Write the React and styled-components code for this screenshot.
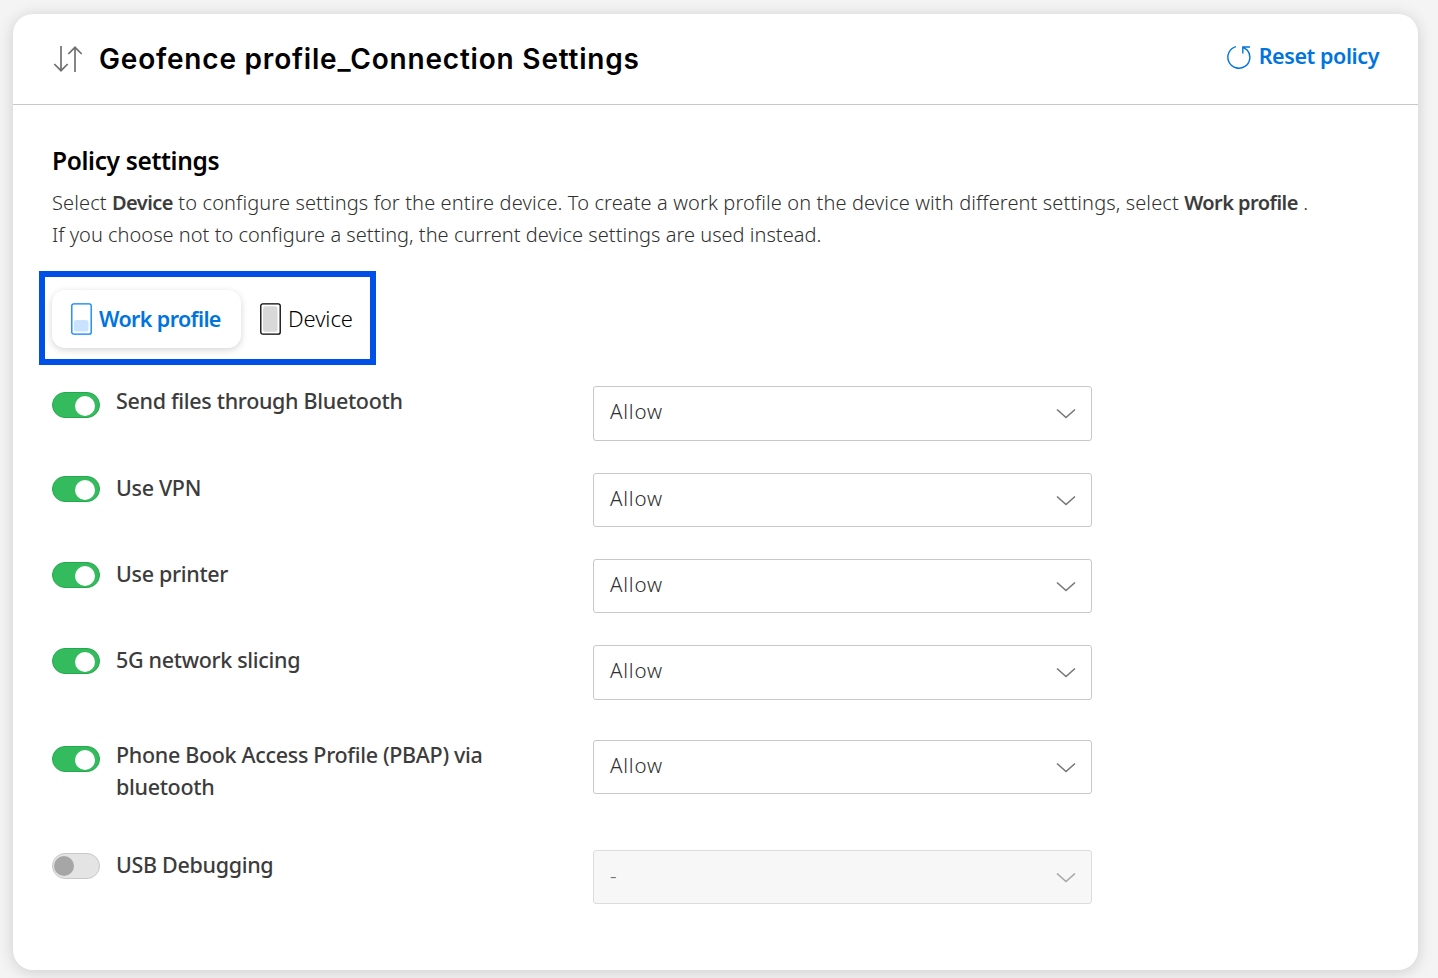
import React from "react";
import styled, { createGlobalStyle, css } from "styled-components";

const GlobalStyle = createGlobalStyle`
  * { box-sizing: border-box; }
  body {
    margin: 0;
    background: #f4f4f4;
    color: #3c3c3c;
    font-family: "Noto Sans", "Open Sans", sans-serif;
    overflow: hidden;
  }
  button { font-family: inherit; }
`;

const Page = styled.main`
  height: 978px;
  padding: 14px 20px 8px 13px;
`;

const Card = styled.section`
  height: 956px;
  border-radius: 20px;
  background: #fff;
  box-shadow: 0 2px 16px rgba(0, 0, 0, 0.16);
`;

const Header = styled.header`
  height: 91px;
  padding: 0 39px 0 40px;
  display: flex;
  align-items: center;
  border-bottom: 1px solid #c8c8c8;
`;

const SortIcon = styled.svg`
  flex: none;
  width: 30px;
  height: 28px;
  margin-right: 16px;
`;

const Title = styled.h1`
  margin: 0;
  font: 600 28px/40px Inter, sans-serif;
  letter-spacing: 0.8px;
  white-space: nowrap;
  color: #000;
`;

const ResetButton = styled.button`
  margin: 0 0 6px auto;
  padding: 0;
  border: 0;
  background: none;
  display: flex;
  align-items: center;
  gap: 8px;
  color: #0074de;
  font-size: 21.5px;
  font-weight: 600;
  line-height: 30px;
  letter-spacing: -0.42px;
  white-space: nowrap;

  svg {
    margin-top: 2px;
  }
`;

const Body = styled.div`
  padding: 40px 39px 0;
`;

const SectionTitle = styled.h2`
  margin: 0;
  font-size: 24.5px;
  font-weight: 600;
  line-height: 32px;
  letter-spacing: -0.35px;
  color: #000;
`;

const Description = styled.div`
  margin: 10px 0 0;
  font-size: 20px;
  font-weight: 300;
  line-height: 32px;
  color: #303030;
  white-space: nowrap;
`;

const Line = styled.p`
  margin: 0;
  letter-spacing: ${(p) => p.$tracking}px;

  strong {
    font-weight: 600;
    letter-spacing: -0.55px;
    color: #3c3c3c;
  }
`;

const TabFrame = styled.div`
  width: 337px;
  height: 94px;
  margin: 20px 0 0 -13px;
  padding: 13px 7px;
  border: 6px solid #004fe6;
  display: flex;
`;

const Tab = styled.button`
  height: 58px;
  padding: 0 0 0 19px;
  border: 0;
  border-radius: 13px;
  background: transparent;
  display: flex;
  align-items: center;
  gap: 6px;
  font-size: 22px;
  font-weight: 300;
  line-height: 30px;
  letter-spacing: -0.1px;
  white-space: nowrap;
  color: #000;

  span {
    margin-bottom: 2px;
  }

  ${(p) =>
    p.$active &&
    css`
      width: 189px;
      flex: none;
      font-size: 21.5px;
      font-weight: 600;
      letter-spacing: -0.62px;
      background: #fff;
      color: #0074de;
      box-shadow: 0 2px 7px rgba(0, 0, 0, 0.17);

      span {
        margin-bottom: 0;
      }
    `}
`;

const Phone = styled.svg`
  flex: none;
  width: 22px;
  height: 32px;
`;

const Settings = styled.div`
  margin-top: 21px;
`;

const Row = styled.div`
  height: ${(p) => p.$height}px;
  display: grid;
  grid-template-columns: 64px 477px 499px;
  align-items: start;
`;

const Toggle = styled.button`
  width: 48px;
  height: 26px;
  margin-top: ${(p) => p.$top}px;
  padding: 2px;
  border: 1px solid ${(p) => (p.$on ? "#22a94d" : "#c8c8c8")};
  border-radius: 13px;
  background: ${(p) => (p.$on ? "#33bb5d" : "#e4e4e4")};
  display: flex;
  align-items: center;
  justify-content: ${(p) => (p.$on ? "flex-end" : "flex-start")};

  &::after {
    content: "";
    width: 20px;
    height: 20px;
    margin: ${(p) => (p.$on ? "1px 2px 0 0" : "0 0 0 -1px")};
    border-radius: 50%;
    background: ${(p) => (p.$on ? "#fff" : "#a6a6a6")};
  }
`;

const Label = styled.label`
  max-width: 385px;
  margin-top: -1px;
  font-size: 21.5px;
  font-weight: 500;
  line-height: 32px;
  letter-spacing: -0.32px;
`;

const Select = styled.button`
  height: ${(p) => p.$height}px;
  padding: 0 15px 5px 16px;
  border: 1px solid ${(p) => (p.disabled ? "#dcdcdc" : "#c8c8c8")};
  border-radius: 3px;
  background: ${(p) => (p.disabled ? "#f7f7f7" : "#fff")};
  color: ${(p) => (p.disabled ? "#707070" : "#303030")};
  display: flex;
  align-items: center;
  justify-content: space-between;
  font-size: 20.5px;
  font-weight: 300;
  line-height: 30px;
  letter-spacing: 0.8px;
`;

const Chevron = styled.svg`
  width: 20px;
  height: 12px;
  margin-top: 6px;
  stroke: ${(p) => (p.$muted ? "#a6a6a6" : "#777")};
`;

const settings = [
  { name: "Send files through Bluetooth", value: "Allow", height: 87, toggleTop: 6, selectHeight: 55 },
  { name: "Use VPN", value: "Allow", height: 86, toggleTop: 3, selectHeight: 54 },
  { name: "Use printer", value: "Allow", height: 86, toggleTop: 3, selectHeight: 54 },
  { name: "5G network slicing", value: "Allow", height: 95, toggleTop: 3, selectHeight: 55 },
  { name: "Phone Book Access Profile (PBAP) via bluetooth", value: "Allow", height: 110, toggleTop: 6, selectHeight: 54 },
  { name: "USB Debugging", value: "-", height: 54, toggleTop: 3, selectHeight: 54, off: true },
];

function PhoneIcon({ color, fill, y, height }) {
  return (
    <Phone viewBox="0 0 22 32">
      <rect x="0.8" y="0.8" width="19.4" height="30.4" rx="2" fill="none" stroke={color} strokeWidth="1.3" />
      <rect x="3" y={y} width="14.5" height={height} rx="2.5" fill={fill} />
    </Phone>
  );
}

function Setting({ name, value, height, toggleTop, selectHeight, off }) {
  return (
    <Row $height={height}>
      <Toggle $on={!off} $top={toggleTop} aria-label={name} />
      <Label>{name}</Label>
      <Select $height={selectHeight} disabled={off}>
        {value}
        <Chevron $muted={off} viewBox="0 0 20 12" fill="none" strokeWidth="1.6">
          <path d="M1 1.5 10 9.5 19 1.5" />
        </Chevron>
      </Select>
    </Row>
  );
}

export default function App() {
  return (
    <Page>
      <GlobalStyle />
      <Card>
        <Header>
          <SortIcon viewBox="0 0 30 28" fill="none" stroke="#707070" strokeWidth="1.7">
            <path d="M8 1V26M1.3 19 8 25.7 14.7 19M22 27V2M15.3 9 22 2.3 28.7 9" />
          </SortIcon>
          <Title>Geofence profile_Connection Settings</Title>
          <ResetButton>
            <svg width="24" height="24" viewBox="0 0 24 24" fill="none" stroke="#0074de" strokeWidth="1.4">
              <path d="M9 1.6A11 11 0 1 0 20 4.8M15.8 8.5V2H23M16.2 2.4 20 4.8" />
            </svg>
            <span>Reset policy</span>
          </ResetButton>
        </Header>
        <Body>
          <SectionTitle>Policy settings</SectionTitle>
          <Description>
            <Line $tracking={0.12}>
              Select <strong>Device</strong> to configure settings for the entire device. To create a work profile on
              the device with different settings, select <strong>Work profile</strong> .
            </Line>
            <Line $tracking={0.02}>
              If you choose not to configure a setting, the current device settings are used instead.
            </Line>
          </Description>
          <TabFrame>
            <Tab $active>
              <PhoneIcon color="#0080ff" fill="#c9e3fe" y={17} height={11.5} />
              <span>Work profile</span>
            </Tab>
            <Tab>
              <PhoneIcon color="#000" fill="#d8d8d8" y={3.2} height={25.6} />
              <span>Device</span>
            </Tab>
          </TabFrame>
          <Settings>
            {settings.map((item) => (
              <Setting key={item.name} {...item} />
            ))}
          </Settings>
        </Body>
      </Card>
    </Page>
  );
}
